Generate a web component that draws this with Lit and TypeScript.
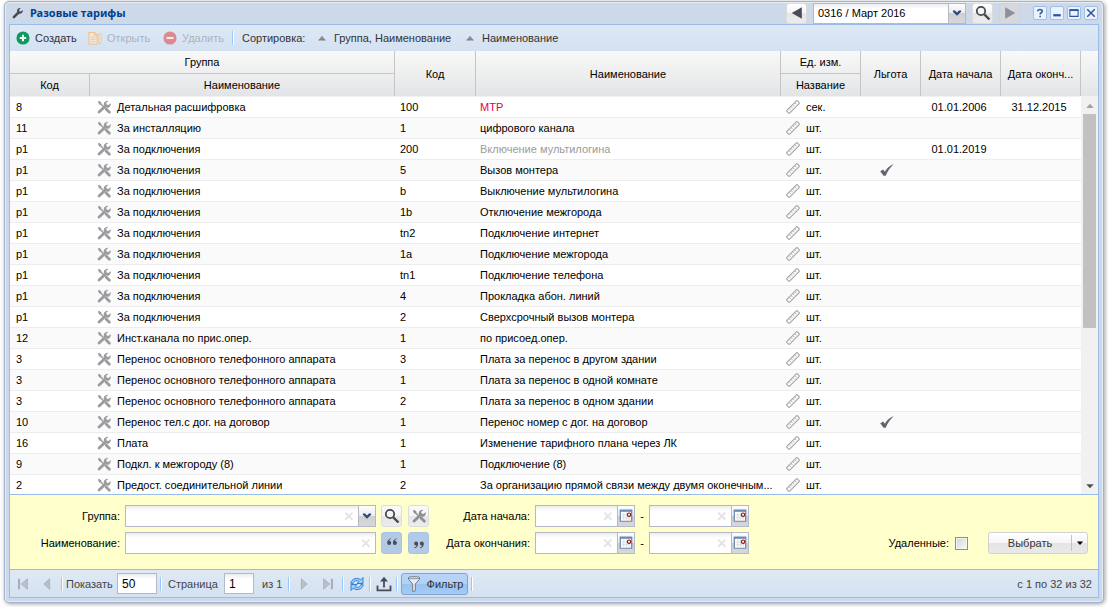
import { LitElement, html, svg, css, nothing } from "lit";
import { customElement } from "lit/decorators.js";
import { classMap } from "lit/directives/class-map.js";

interface Tariff {
  groupCode: string;
  group: string;
  code: string;
  name: string;
  unit?: string;
  benefit?: boolean;
  from?: string;
  to?: string;
  tone?: "closed" | "future";
}

const TARIFFS: Tariff[] = [
  { groupCode: "8", group: "Детальная расшифровка", code: "100", name: "МТР", unit: "сек.", from: "01.01.2006", to: "31.12.2015", tone: "closed" },
  { groupCode: "11", group: "За инсталляцию", code: "1", name: "цифрового канала" },
  { groupCode: "p1", group: "За подключения", code: "200", name: "Включение мультилогина", from: "01.01.2019", tone: "future" },
  { groupCode: "p1", group: "За подключения", code: "5", name: "Вызов монтера", benefit: true },
  { groupCode: "p1", group: "За подключения", code: "b", name: "Выключение мультилогина" },
  { groupCode: "p1", group: "За подключения", code: "1b", name: "Отключение межгорода" },
  { groupCode: "p1", group: "За подключения", code: "tn2", name: "Подключение интернет" },
  { groupCode: "p1", group: "За подключения", code: "1a", name: "Подключение межгорода" },
  { groupCode: "p1", group: "За подключения", code: "tn1", name: "Подключение телефона" },
  { groupCode: "p1", group: "За подключения", code: "4", name: "Прокладка абон. линий" },
  { groupCode: "p1", group: "За подключения", code: "2", name: "Сверхсрочный вызов монтера" },
  { groupCode: "12", group: "Инст.канала по прис.опер.", code: "1", name: "по присоед.опер." },
  { groupCode: "3", group: "Перенос основного телефонного аппарата", code: "3", name: "Плата за перенос в другом здании" },
  { groupCode: "3", group: "Перенос основного телефонного аппарата", code: "1", name: "Плата за перенос в одной комнате" },
  { groupCode: "3", group: "Перенос основного телефонного аппарата", code: "2", name: "Плата за перенос в одном здании" },
  { groupCode: "10", group: "Перенос тел.с дог. на договор", code: "1", name: "Перенос номер с дог. на договор", benefit: true },
  { groupCode: "16", group: "Плата", code: "1", name: "Изменение тарифного плана через ЛК" },
  { groupCode: "9", group: "Подкл. к межгороду (8)", code: "1", name: "Подключение (8)" },
  { groupCode: "2", group: "Предост. соединительной линии", code: "2", name: "За организацию прямой связи между двумя оконечным..." },
];

const ICONS = {
  wrench: svg`<path d="M2.5 13.5 8 8" stroke="currentColor" stroke-width="3.4" stroke-linecap="round"/><path d="M8.9 1.6a4 4 0 0 0-1.8 5.2l2 2a4 4 0 0 0 5.3-4.7l-2.5 2-2-.6-.5-2 2.3-2a4 4 0 0 0-2.8.1z" fill="currentColor"/>`,
  tools: svg`<path d="M2.400 13.800 9 7.400" stroke="currentColor" stroke-width="3.200" stroke-linecap="round"/><path d="M9.900 1.400a4 4 0 0 0-1.900 5L10 8.400a4 4 0 0 0 5.600-4.700l-2.600 2.100-2-.6-.5-2L13 1.200a4 4 0 0 0-3.100.2z" fill="currentColor"/><path d="M1 2 2.300.800 5 2.800 5.100 4.200 8.200 7.200 7 8.400 3.900 5.400 2.500 5.200z" fill="currentColor"/><path d="m10.400 10.400 3.700 3.700" stroke="currentColor" stroke-width="3.200" stroke-linecap="round"/>`,
  ruler: svg`<path d="M1 11.800 11.800 1a1 1 0 0 1 1.300 0l1.900 1.900a1 1 0 0 1 0 1.300L4.200 15a1 1 0 0 1-1.300 0L1 13.100a1 1 0 0 1 0-1.300z" fill="#fbfbfb" stroke="#a2a2a2" stroke-width="1.200"/><path d="m3.800 10 1.500 1.500M6 7.800l1.500 1.500M8.200 5.600l1.500 1.500M10.400 3.400l1.500 1.500" stroke="#a2a2a2"/>`,
  check: svg`<path d="M.3 9.500 3.600 7.300l2 2.600C7.800 6.200 10.600 3.200 15.800 1.200 11.400 5.100 8.600 9.600 6.500 14.500H4z" fill="#62656f"/>`,
  plus: svg`<circle cx="8" cy="8" r="7.500" fill="#0d9a5c"/><path d="M8 4.300v7.400M4.300 8h7.400" stroke="#fff" stroke-width="2.200"/>`,
  minus: svg`<circle cx="8" cy="8" r="7.500" fill="#d98a92"/><path d="M4 8h8" stroke="#f6e8ec" stroke-width="2.400"/>`,
  open: svg`<path d="M1 1.700h6.500l3 3V15H1z" fill="#f3e8dc" stroke="#efc597" stroke-width="1.400"/><path d="M7.200 2v3h3M3 7h5.500M3 9.500h5.500M3 12h5.500" fill="none" stroke="#efc597" stroke-width="1.100"/><path d="M12.500 3h2.500v9.500L13.800 15l-1.300-2.500z" fill="#f3e8dc" stroke="#efc597"/>`,
  sortUp: svg`<path d="m8 4.500 5.500 6.500h-11z" fill="#8c8c8c"/><path d="M2 11.500h12" stroke="#6e6e6e"/>`,
  left: svg`<path d="M13.500 1.500v13L2 8z" fill="#4a4a58"/>`,
  right: svg`<path d="M2.500 1.500v13L14 8z" fill="#8f9097"/>`,
  search: svg`<circle cx="6" cy="6" r="4.200" fill="#f4f4f4" stroke="#474753" stroke-width="1.800"/><path d="m9.300 9.300 5.200 5.200" stroke="#474753" stroke-width="2.400"/>`,
  chevron: svg`<path d="M2.500 4.500h3L8 7.200l2.500-2.700h3v1.700L8 11.800 2.500 6.200z" fill="#2f4a80"/>`,
  clear: svg`<path d="m3 3.500 9.500 9.500M12.500 3.500 3 13" stroke="#e4e4e4" stroke-width="2.600"/>`,
  calendar: svg`<path d="M1.500 1.500h13v12.500h-13z" fill="#fff" stroke="#6789b5" stroke-width="1.400"/><path d="M1 2h14" stroke="#6789b5" stroke-width="2.400"/><path d="M5.500 4v9M8.500 4v9M11.500 4v9M3 7h10M3 10h10" stroke="#d9d9d9"/><circle cx="11.500" cy="6.500" r="1.900" fill="#fff" stroke="#8c1515" stroke-width="1.300"/>`,
  quoteOpen: svg`<path d="M7 2.500C4 3.200 2.500 5 2.500 8a2.300 2.300 0 1 0 2-2.400C4.600 4.500 5.600 3.700 7 3.400zM13.500 2.500C10.500 3.200 9 5 9 8a2.300 2.300 0 1 0 2-2.400c.1-1.100 1.100-1.900 2.500-2.200z" fill="#4a4c5c"/>`,
  quoteClose: svg`<path d="M2.500 14C5.500 13.300 7 11.500 7 8.500a2.300 2.300 0 1 0-2 2.400C4.900 12 3.900 12.800 2.500 13.100zM9 14c3-.7 4.500-2.500 4.500-5.500a2.300 2.300 0 1 0-2 2.400c-.1 1.100-1.100 1.900-2.500 2.200z" fill="#4a4c5c"/>`,
  first: svg`<path d="M3.500 2v12" stroke="#a8afb8" stroke-width="2.400"/><path d="M13 2v12L6 8z" fill="#b9c0c8" stroke="#a0a7b0" stroke-width=".8"/>`,
  prev: svg`<path d="M11 2v12L4.500 8z" fill="#b9c0c8" stroke="#a0a7b0" stroke-width=".8"/>`,
  next: svg`<path d="M5 2v12l6.500-6z" fill="#b9c0c8" stroke="#a0a7b0" stroke-width=".8"/>`,
  last: svg`<path d="M12.500 2v12" stroke="#a8afb8" stroke-width="2.400"/><path d="M3 2v12l7-6z" fill="#b9c0c8" stroke="#a0a7b0" stroke-width=".8"/>`,
  refresh: svg`<path d="M1.800 7.300C2.300 3 8 .8 11.800 3.800L14 1.500V7.500H8l2-2C7.800 3.800 4.800 4.600 4.300 7.300z" fill="#9fd0fa" stroke="#2f7fd6"/><path d="M14.200 8.700C13.700 13 8 15.200 4.200 12.200L2 14.500V8.500h6l-2 2c2.200 1.700 5.200.9 5.700-1.800z" fill="#9fd0fa" stroke="#2f7fd6"/>`,
  upload: svg`<path d="M1.500 9.500v4.800h13V9.500" fill="none" stroke="#4a4a55" stroke-width="1.800"/><path d="M8 11.500V4" stroke="#4a4a55" stroke-width="1.800"/><path d="m8 .8 4 4.700H4z" fill="#4a4a55"/>`,
  funnel: svg`<path d="M2.500 1.500c0-1 11-1 11 0v1.800L9.300 8v6.800l-2.600.7V8L2.500 3.300z" fill="#e9edf2" stroke="#737a83"/><path d="M3 2.700h10" stroke="#8c929a"/>`,
  help: svg`<path d="M5 5.800C5 2.600 11 2.600 11 5.700c0 2-2.800 2-2.800 4.200M8.200 11.500v2.200" fill="none" stroke="#3a5ea5" stroke-width="2.200"/>`,
  minimize: svg`<path d="M3 11h10" stroke="#2f549c" stroke-width="3"/>`,
  maximize: svg`<path d="M2.500 4.500h11v8h-11z" fill="none" stroke="#2f549c" stroke-width="1.400"/><path d="M2 4h12" stroke="#2f549c" stroke-width="2.400"/>`,
  close: svg`<path d="m3 3 10 10M13 3 3 13" stroke="#2f549c" stroke-width="2"/>`,
  up: svg`<path d="M3 10.500h10L8 5z" fill="currentColor"/>`,
  caret: svg`<path d="M3 5.500h10L8 11z" fill="currentColor"/>`,
};

const icon = (name: keyof typeof ICONS, size = "i14") =>
  html`<svg class=${"icon " + size} viewBox="0 0 16 16" fill="none" aria-hidden="true">${ICONS[name]}</svg>`;

@customElement("app-root")
export class AppRoot extends LitElement {
  static styles = css`
    :host { display: block; height: 100vh; box-sizing: border-box; padding: 1px 4px 4px; background: #fff; font: 11px/14px "Liberation Sans", Arial, sans-serif; color: #000; }
    * { box-sizing: border-box; }
    button, input, select { font: inherit; color: inherit; margin: 0; padding: 0; border: 0; border-radius: 0; background: none; }
    button { display: flex; align-items: center; justify-content: center; cursor: pointer; white-space: nowrap; }
    svg.icon { display: block; flex: none; }
    .i10 { width: 10px; height: 10px; }
    .i12 { width: 12px; height: 12px; }
    .i14 { width: 14px; height: 14px; }
    .i16 { width: 16px; height: 16px; }

    .window { height: 100%; display: flex; flex-direction: column; padding: 0 4px 4px; border: 1px solid #a2b1cc; border-radius: 5px; background: #cdd9e8; box-shadow: inset 0 0 0 1px #e6edf6, 1px 1px 4px #a0a0a0; }
    .title-bar { flex: none; height: 22px; display: flex; align-items: center; gap: 6px; padding-left: 3px; }
    .title { flex: 1; margin: 0; font-family: "Noto Sans", sans-serif; font-size: 11px; font-weight: bold; color: #04408c; }
    .title-icon { color: #4a4a55; }
    .tool-btn { width: 21px; height: 21px; border: 1px solid #dcdcdc; border-radius: 3px; background: linear-gradient(#fff, #f4f4f4 50%, #e6e6e8 50%, #ececec); }
    .tool-btn.dim { border-color: #cfd2d6; background: #d5d8dc; }
    .window-tools { display: flex; gap: 3px; margin: 0 1px 0 7px; }
    .window-tools button { width: 14px; height: 14px; border: 1px solid #9fc0ea; border-radius: 2px; background: #e9f2fd; }

    .field { display: flex; height: 22px; border: 1px solid #b5b8c8; background: linear-gradient(#ededed, #fff 5px); }
    .field input { flex: 1; min-width: 0; padding: 0 4px; outline: none; }
    .field .wipe { width: 18px; }
    .field .trigger { width: 17px; border-left: 1px solid #b5b8c8; background: linear-gradient(#fdfdfd, #ececec 50%, #cfcfcf 50%, #d8d8d8); }
    .period { width: 153px; height: 21px; }

    .body { flex: 1; min-height: 0; display: flex; flex-direction: column; border: 1px solid #99bce8; }
    .toolbar { flex: none; height: 26px; display: flex; align-items: center; padding: 0 6px; background: linear-gradient(#dfe9f5, #d3e1f1); color: #333; }
    .toolbar button { gap: 5px; justify-content: flex-start; }
    .toolbar .create { width: 72px; }
    .toolbar .open { width: 75px; }
    .toolbar .delete { width: 69px; }
    .toolbar .sort-label { width: 75px; margin-left: 8px; }
    .toolbar .sort-group { width: 148px; gap: 7px; }
    .toolbar .sort-name { gap: 7px; }
    .toolbar button:disabled { color: #aab4c0; }
    .sep { flex: none; width: 2px; height: 14px; border-left: 1px solid #98c8ff; border-right: 1px solid #fff; }

    .grid { flex: 1; min-height: 0; display: flex; flex-direction: column; background: #fff; }
    table { width: 100%; table-layout: fixed; border-collapse: separate; border-spacing: 0; }
    .head { flex: none; display: flex; background: linear-gradient(#f9f9f9, #e3e4e6); border-bottom: 1px solid #f1f1f1; }
    .gutter { flex: none; width: 17px; }
    .head th { height: 22px; padding: 0 4px; border-right: 1px solid #c5c5c5; font-weight: normal; white-space: nowrap; }
    .head .over { height: 23px; border-bottom: 1px solid #c5c5c5; }
    .scroller { flex: 1; min-height: 0; display: flex; overflow: hidden; }
    .rows { flex: 1; min-width: 0; }
    .rows td { height: 21px; padding: 0 4px; border-bottom: 1px solid #ededed; white-space: nowrap; }
    .rows tr:nth-child(even) td { background: #fafafa; }
    .rows td:first-child { padding-left: 6px; }
    .rows td:nth-child(3) { padding-left: 5px; }
    .rows .mid { text-align: center; padding-right: 8px; }
    .rows .closed { color: #e8003a; }
    .rows .future { color: #9b9b9b; }
    .with-icon { display: flex; align-items: center; gap: 6px; padding-left: 3px; color: #9b9ba0; }
    .with-icon.unit { padding-left: 1px; }
    .with-icon span { color: #000; }
    .mark { display: flex; justify-content: center; padding-right: 8px; }
    .c-code { width: 80px; }
    .c-num { width: 81px; }
    .c-ben { width: 60px; }
    .scrollbar { flex: none; width: 17px; display: flex; flex-direction: column; background: #f1f1f1; }
    .scrollbar button { flex: none; height: 17px; color: #505050; }
    .scrollbar .up { color: #a3a3a3; }
    .track { flex: 1; padding: 0 2px; }
    .thumb { height: 59%; background: #c1c1c1; }

    .filter { flex: none; display: flex; align-items: flex-end; padding: 10px 10px 15px 0; background: #ffffcc; border-top: 1px solid #99bce8; border-bottom: 1px solid #99bce8; }
    .fields { display: grid; grid-template-columns: 110px 251px 48px 96px auto; gap: 5px; align-items: center; }
    .fields label { text-align: right; white-space: nowrap; }
    .pair { display: flex; gap: 6px; }
    .pair button { width: 21px; height: 22px; border: 1px solid #dcdcdc; border-radius: 3px; background: linear-gradient(#fbfbfb, #f3f3f3 50%, #e6e6e6 50%, #ececec); color: #8f8f93; }
    .pair .quote { border-color: #a9c3e6; background: #b3cae6; }
    .range { display: flex; align-items: center; }
    .dash { width: 14px; text-align: center; }
    .date { width: 100px; }
    .spacer { flex: 1; }
    .deleted { display: flex; align-items: center; gap: 6px; height: 22px; margin-right: 20px; }
    .deleted input { appearance: none; width: 13px; height: 13px; border: 1px solid #8e8f8f; background: linear-gradient(135deg, #d2d5d9, #f8f8f8); box-shadow: inset 0 0 0 1px #f4f4f4; }
    .split { display: flex; width: 100px; height: 22px; border: 1px solid #d1d1d1; border-radius: 3px; overflow: hidden; background: linear-gradient(#fff, #f6f6f6 48%, #e4e4e4 52%, #e9e9e9); color: #333; }
    .split .pick { flex: 1; }
    .split .more { width: 16px; height: 16px; align-self: center; border-left: 1px solid #c4c4c4; color: #000; }

    .pager { flex: none; height: 27px; display: flex; align-items: center; gap: 2px; padding: 0 6px 0 2px; background: linear-gradient(#dfe9f5, #d3e1f1); color: #444; }
    .pager .sep { margin: 0 1px; }
    .pager .nav { width: 22px; height: 22px; }
    .pager .field { height: 21px; color: #000; font-size: 12px; }
    .show { display: flex; align-items: center; }
    .show .show-text { width: 51px; }
    .show .page-text { width: 59px; padding-left: 3px; }
    .f-size { width: 40px; }
    .f-page { width: 30px; }
    .of { width: 23px; margin-left: 6px; white-space: nowrap; }
    .wide { width: 19px; height: 22px; }
    .toggle { width: 67px; height: 22px; gap: 5px; border: 1px solid #83a3cf; border-radius: 3px; background: linear-gradient(#b9d5f6, #b0d1f7 48%, #98c3f2 52%, #a4cbf5); color: #333; }
  `;

  private period() {
    return html`<div class="field period">
      <input type="text" aria-label="Период" .value=${"0316 / Март 2016"} />
      <button class="trigger" aria-label="Выбрать период">${icon("chevron", "i12")}</button>
    </div>`;
  }

  private dateField(id: string, label: string) {
    return html`<div class="field date">
      <input id=${id} type="text" aria-label=${label} />
      <button type="button" class="wipe" aria-label="Очистить">${icon("clear", "i12")}</button>
      <button type="button" class="trigger" aria-label="Календарь">${icon("calendar", "i14")}</button>
    </div>`;
  }

  private dateRange(id: string, label: string) {
    return html`<label for=${id + "-min"}>${label}:</label>
      <div class="range">
        ${this.dateField(id + "-min", label + " с")}<span class="dash">-</span>${this.dateField(id + "-max", label + " по")}
      </div>`;
  }

  private columns() {
    return html`<colgroup>
      <col class="c-code" /><col /><col class="c-num" /><col />
      <col class="c-code" /><col class="c-ben" /><col class="c-code" /><col class="c-code" />
    </colgroup>`;
  }

  private row(t: Tariff) {
    return html`<tr>
      <td>${t.groupCode}</td>
      <td><div class="with-icon">${icon("tools", "i14")}<span>${t.group}</span></div></td>
      <td>${t.code}</td>
      <td class=${classMap({ closed: t.tone === "closed", future: t.tone === "future" })}>${t.name}</td>
      <td><div class="with-icon unit">${icon("ruler", "i14")}<span>${t.unit ?? "шт."}</span></div></td>
      <td>${t.benefit ? html`<div class="mark">${icon("check", "i14")}</div>` : nothing}</td>
      <td class="mid">${t.from ?? nothing}</td>
      <td class="mid">${t.to ?? nothing}</td>
    </tr>`;
  }

  private grid() {
    return html`<div class="grid">
      <div class="head">
        <table>
          ${this.columns()}
          <thead>
            <tr>
              <th class="over" colspan="2">Группа</th>
              <th rowspan="2">Код</th>
              <th rowspan="2">Наименование</th>
              <th class="over">Ед. изм.</th>
              <th rowspan="2">Льгота</th>
              <th rowspan="2">Дата начала</th>
              <th rowspan="2">Дата оконч...</th>
            </tr>
            <tr><th>Код</th><th>Наименование</th><th>Название</th></tr>
          </thead>
        </table>
        <div class="gutter"></div>
      </div>
      <div class="scroller">
        <div class="rows"><table>${this.columns()}<tbody>${TARIFFS.map((t) => this.row(t))}</tbody></table></div>
        <div class="scrollbar">
          <button class="up" aria-label="Вверх">${icon("up", "i12")}</button>
          <div class="track"><div class="thumb"></div></div>
          <button aria-label="Вниз">${icon("caret", "i12")}</button>
        </div>
      </div>
    </div>`;
  }

  private filter() {
    return html`<form class="filter" @submit=${(e: Event) => e.preventDefault()}>
      <div class="fields">
        <label for="group">Группа:</label>
        <div class="field">
          <input id="group" type="text" />
          <button type="button" class="wipe" aria-label="Очистить">${icon("clear", "i12")}</button>
          <button type="button" class="trigger" aria-label="Список групп">${icon("chevron", "i12")}</button>
        </div>
        <div class="pair">
          <button type="button" aria-label="Найти">${icon("search", "i16")}</button>
          <button type="button" aria-label="Группа">${icon("tools", "i14")}</button>
        </div>
        ${this.dateRange("start", "Дата начала")}
        <label for="name">Наименование:</label>
        <div class="field">
          <input id="name" type="text" />
          <button type="button" class="wipe" aria-label="Очистить">${icon("clear", "i12")}</button>
        </div>
        <div class="pair">
          <button type="button" class="quote" aria-label="Начинается с">${icon("quoteOpen", "i14")}</button>
          <button type="button" class="quote" aria-label="Заканчивается на">${icon("quoteClose", "i14")}</button>
        </div>
        ${this.dateRange("end", "Дата окончания")}
      </div>
      <div class="spacer"></div>
      <label class="deleted">Удаленные: <input type="checkbox" /></label>
      <div class="split">
        <button type="button" class="pick">Выбрать</button>
        <button type="button" class="more" aria-label="Другие действия">${icon("caret", "i10")}</button>
      </div>
    </form>`;
  }

  private pager() {
    return html`<div class="pager">
      <button class="nav" disabled aria-label="Первая">${icon("first", "i14")}</button>
      <button class="nav" disabled aria-label="Предыдущая">${icon("prev", "i14")}</button>
      <span class="sep"></span>
      <label class="show"><span class="show-text">Показать</span><span class="field f-size"><input type="text" .value=${"50"} /></span></label>
      <span class="sep"></span>
      <label class="show"><span class="page-text">Страница</span><span class="field f-page"><input type="text" .value=${"1"} /></span></label>
      <span class="of">из 1</span>
      <span class="sep"></span>
      <button class="nav" disabled aria-label="Следующая">${icon("next", "i14")}</button>
      <button class="nav" disabled aria-label="Последняя">${icon("last", "i14")}</button>
      <span class="sep"></span>
      <button class="wide" aria-label="Обновить">${icon("refresh", "i16")}</button>
      <span class="sep"></span>
      <button class="wide" aria-label="Выгрузить">${icon("upload", "i16")}</button>
      <span class="sep"></span>
      <button class="toggle" aria-pressed="true">${icon("funnel", "i16")}Фильтр</button>
      <span class="sep"></span>
      <span class="spacer"></span>
      <span>с 1 по 32 из 32</span>
    </div>`;
  }

  render() {
    return html`<section class="window">
      <header class="title-bar">
        <span class="title-icon">${icon("wrench", "i12")}</span>
        <h1 class="title">Разовые тарифы</h1>
        <button class="tool-btn" aria-label="Предыдущий период">${icon("left", "i14")}</button>
        ${this.period()}
        <button class="tool-btn" aria-label="Найти период">${icon("search", "i16")}</button>
        <button class="tool-btn dim" disabled aria-label="Следующий период">${icon("right", "i14")}</button>
        <div class="window-tools">
          <button aria-label="Справка">${icon("help", "i12")}</button>
          <button aria-label="Свернуть">${icon("minimize", "i12")}</button>
          <button aria-label="Развернуть">${icon("maximize", "i12")}</button>
          <button aria-label="Закрыть">${icon("close", "i12")}</button>
        </div>
      </header>
      <div class="body">
        <div class="toolbar">
          <button class="create">${icon("plus", "i14")}Создать</button>
          <button class="open" disabled>${icon("open", "i14")}Открыть</button>
          <button class="delete" disabled>${icon("minus", "i14")}Удалить</button>
          <span class="sep"></span>
          <span class="sort-label">Сортировка:</span>
          <button class="sort-group">${icon("sortUp", "i10")}Группа, Наименование</button>
          <button class="sort-name">${icon("sortUp", "i10")}Наименование</button>
        </div>
        ${this.grid()} ${this.filter()} ${this.pager()}
      </div>
    </section>`;
  }
}
